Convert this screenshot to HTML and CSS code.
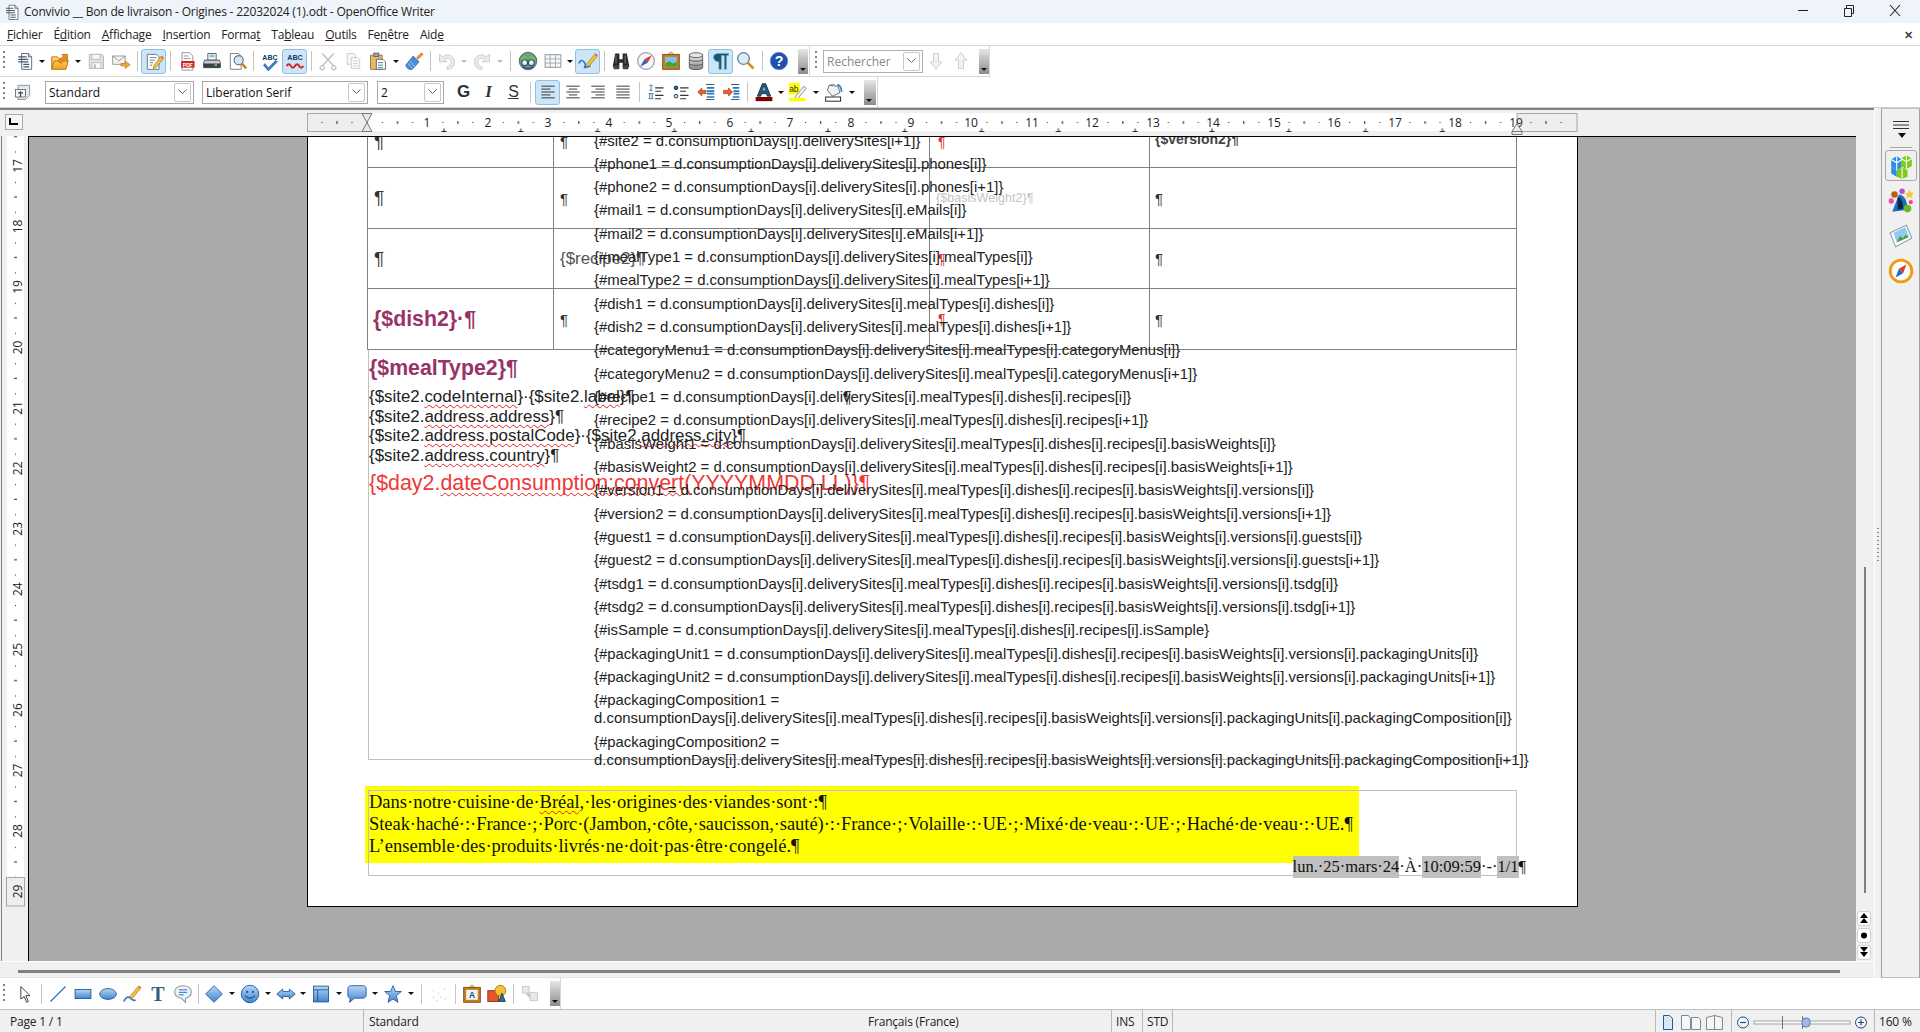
FILE: index.html
```html
<!DOCTYPE html>
<html lang="fr">
<head>
<meta charset="utf-8">
<title>Convivio __ Bon de livraison - Origines - 22032024 (1).odt - OpenOffice Writer</title>
<link rel="stylesheet" href="styles.css">
</head>
<body>
<svg class="defs" width="0" height="0" aria-hidden="true">
<defs>
<linearGradient id="gBlue" x1="0" y1="0" x2="0" y2="1"><stop offset="0" stop-color="#b9d6f2"/><stop offset="1" stop-color="#3f86cf"/></linearGradient>
<linearGradient id="gFold" x1="0" y1="0" x2="0" y2="1"><stop offset="0" stop-color="#ffd968"/><stop offset="1" stop-color="#f0a020"/></linearGradient>
<linearGradient id="gGrey" x1="0" y1="0" x2="0" y2="1"><stop offset="0" stop-color="#e8e8e8"/><stop offset="1" stop-color="#8a8a8a"/></linearGradient>
<symbol id="i-doc" viewBox="0 0 24 24"><path d="M8 3h8l4 4v15H8z" fill="#fff" stroke="#44586c"/><path d="M16 3v4h4" fill="#cfd8e0" stroke="#44586c"/><path d="M4 7h10M4 10h12M4 13h12M10 16h7M10 19h7" stroke="#44586c" stroke-width="1.4"/></symbol>
<symbol id="i-open" viewBox="0 0 24 24"><path d="M2 7h7l2 2h9v3h2l-3 10H2z" fill="url(#gFold)" stroke="#b06a10"/><path d="M2 22l3-10h17" fill="none" stroke="#b06a10"/><path d="M10 12l6-6-2-2h7v7l-2-2-6 6z" fill="#f08a1e" stroke="#a85a10" stroke-width=".7"/></symbol>
<symbol id="i-save" viewBox="0 0 24 24"><path d="M4 4h15l2 2v15H4z" fill="#e2e2e2" stroke="#b0b0b0"/><path d="M7 4h10v6H7zM7 14h11v7H7z" fill="#f7f7f7" stroke="#b8b8b8"/><path d="M9 16h3v5H9z" fill="#c4c4c4"/></symbol>
<symbol id="i-mail" viewBox="0 0 24 24"><path d="M2 6h15v10H2z" fill="#f4f4f4" stroke="#8b8b8b"/><path d="M2 6l7.500 6L17 6" fill="none" stroke="#8b8b8b"/><path d="M12 15h5v-3l6 4.500-6 4.500v-3h-5z" fill="#f0a83a" stroke="#a86c10" stroke-width=".7"/></symbol>
<symbol id="i-edit" viewBox="0 0 24 24"><path d="M4 4h11l3 3v15H4z" fill="#fff" stroke="#56697c"/><path d="M7 8h8M7 11h6M7 14h4M7 17h3" stroke="#56697c"/><path d="M12 17l8-10 3 2.500-8 10-4 1.500z" fill="#f4c040" stroke="#9a6a10" stroke-width=".7"/><path d="M20 7l1-1.300 3 2.500-1 1.300z" fill="#e0604c"/></symbol>
<symbol id="i-pdf" viewBox="0 0 24 24"><path d="M6 2h9l4 4v17H6z" fill="#fff" stroke="#7c8894"/><path d="M8 6h6M8 9h8" stroke="#7c8894"/><rect x="5" y="12" width="16" height="8" fill="#d8231b"/><text x="13" y="19" class="svgt-pdf">PDF</text></symbol>
<symbol id="i-print" viewBox="0 0 24 24"><path d="M7 3h10v8H7z" fill="#fff" stroke="#1f4f70"/><path d="M9 5h6M9 7h6" stroke="#5e85a0"/><path d="M3 11h18l1 3v6H2v-6z" fill="#c9ced2" stroke="#3a3f44"/><rect x="2" y="15" width="20" height="5" fill="#3a3f44"/><rect x="15" y="16" width="3" height="2" fill="#6fd04a"/></symbol>
<symbol id="i-prev" viewBox="0 0 24 24"><path d="M4 3h10l3 3v16H4z" fill="#fff" stroke="#5e7080"/><circle cx="14" cy="11" r="5.500" fill="#cfe6f7" stroke="#5a6f82" stroke-width="1.300"/><path d="M18 15l5 6" stroke="#c8861a" stroke-width="3"/></symbol>
<symbol id="i-spell" viewBox="0 0 24 24"><text x="12" y="11" class="svgt-abc svgt-dark">ABC</text><path d="M6 15l4 5 9-9 2 2-11 11-6-7z" fill="#3a78c8" stroke="#1c4a8a" stroke-width=".5"/></symbol>
<symbol id="i-auto" viewBox="0 0 24 24"><text x="12" y="11" class="svgt-abc svgt-dark">ABC</text><path d="M2 18q2.500-4 5 0t5 0 5 0 5 0" fill="none" stroke="#d81e1e" stroke-width="2.400"/></symbol>
<symbol id="i-cut" viewBox="0 0 24 24"><path d="M5 3l14 15M19 3L5 18" stroke="#c4c4c4" stroke-width="2"/><circle cx="5" cy="20" r="2.500" fill="none" stroke="#c4c4c4" stroke-width="1.500"/><circle cx="19" cy="20" r="2.500" fill="none" stroke="#c4c4c4" stroke-width="1.500"/></symbol>
<symbol id="i-copy" viewBox="0 0 24 24"><path d="M5 3h8l2 2v11H5z" fill="#f5f5f5" stroke="#c8c8c8"/><path d="M10 8h8l2 2v11H10z" fill="#fafafa" stroke="#c8c8c8"/><path d="M12 12h6M12 15h6M12 18h6" stroke="#d0d0d0"/></symbol>
<symbol id="i-paste" viewBox="0 0 24 24"><path d="M3 5h14v17H3z" fill="#e8b964" stroke="#8f6a26"/><rect x="7" y="2.500" width="6" height="4" fill="#9aa6b0" stroke="#556"/><path d="M10 10h8l3 3v9H10z" fill="#fff" stroke="#3d5a78"/><path d="M12 14h6M12 17h6M12 20h6" stroke="#3d5a78"/></symbol>
<symbol id="i-brush" viewBox="0 0 24 24"><path d="M15 8l6-6 2 2-6 6z" fill="#e8962a" stroke="#9a5a10" stroke-width=".6"/><path d="M11 6l7 7-8 9c-3 1-7-1-8-5z" fill="#4b8ad8" stroke="#1f4f8f" stroke-width=".8"/><path d="M7 12l6 7M5 15l5 6" stroke="#bcd8f4"/></symbol>
<symbol id="i-undo" viewBox="0 0 24 24"><path d="M3 4v9h9l-3-3c4-3 8-1 8 3 0 3-2 5-5 6v3c6 0 9-4 9-9 0-7-8-11-14-6z" fill="#ececec" stroke="#c6c6c6"/></symbol>
<symbol id="i-redo" viewBox="0 0 24 24"><path d="M21 4v9h-9l3-3c-4-3-8-1-8 3 0 3 2 5 5 6v3c-6 0-9-4-9-9 0-7 8-11 14-6z" fill="#ececec" stroke="#c6c6c6"/></symbol>
<symbol id="i-globe" viewBox="0 0 24 24"><circle cx="12" cy="12" r="10.500" fill="#6f9a8e" stroke="#3c5a52"/><path d="M3 10q3-6 8-3l-2 5H4zM14 5q6 1 7 7l-5 1-3-3z" fill="#72c04c"/><circle cx="8" cy="14" r="3.500" fill="#eaf4f8" stroke="#27506a" stroke-width="1.300"/><circle cx="16" cy="14" r="3.500" fill="#eaf4f8" stroke="#27506a" stroke-width="1.300"/><path d="M5 19q7 3 14 0" fill="none" stroke="#27506a" stroke-width="1.500"/></symbol>
<symbol id="i-table" viewBox="0 0 24 24"><rect x="2.500" y="4.500" width="19" height="15" fill="#f4f6f8" stroke="#7e868e"/><path d="M2.500 9.500h19M2.500 14.500h19M8.500 4.500v15M15 4.500v15" stroke="#9aa2aa"/></symbol>
<symbol id="i-draw" viewBox="0 0 24 24"><path d="M1 15q3-6 6-2t1 6 7-1" fill="none" stroke="#2a78c8" stroke-width="2"/><path d="M11 15l9-11 3 2.500-9 11-4 1.500z" fill="#f4c040" stroke="#9a6a10" stroke-width=".7"/><path d="M20 4l1-1.300 3 2.500-1 1.300z" fill="#e05c4c"/></symbol>
<symbol id="i-bino" viewBox="0 0 24 24"><path d="M5 3h5v7h4V3h5l3 16h-8v-5h-4v5H2z" fill="#26282a"/><rect x="3" y="17" width="7" height="5" rx="1" fill="#404448"/><rect x="14" y="17" width="7" height="5" rx="1" fill="#404448"/><path d="M6 5v10M17 5v10" stroke="#85898d"/></symbol>
<symbol id="i-comp" viewBox="0 0 24 24"><circle cx="12" cy="12" r="10" fill="#f8f8f8" stroke="#9aa0a6" stroke-width="1.500"/><path d="M19 5l-5 9-4-4z" fill="#d83a2e"/><path d="M5 19l5-9 4 4z" fill="#2a66c0"/></symbol>
<symbol id="i-gal" viewBox="0 0 24 24"><path d="M12 1l3 3H9z" fill="none" stroke="#a06a20"/><rect x="2" y="4" width="20" height="18" fill="#c87a1e" stroke="#7a4a10"/><rect x="5" y="7" width="14" height="12" fill="#7cc4ee"/><path d="M5 19v-4l5-3 4 3 5-2v6z" fill="#4f9e34"/></symbol>
<symbol id="i-db" viewBox="0 0 24 24"><path d="M4 5v15c0 3 16 3 16 0V5z" fill="url(#gGrey)" stroke="#4c4c4c"/><ellipse cx="12" cy="5" rx="8" ry="3" fill="#e4e4e4" stroke="#4c4c4c"/><path d="M4 10c0 3 16 3 16 0M4 15c0 3 16 3 16 0" fill="none" stroke="#4c4c4c"/></symbol>
<symbol id="i-para" viewBox="0 0 24 24"><path d="M9.500 22V13C5 13 3 10 3 7.500S5 3 9 3h12v2.500h-2.500V22H16V5.500h-3.500V22z" fill="#1c566e" stroke="#6aaad0" stroke-width=".8"/></symbol>
<symbol id="i-zoom" viewBox="0 0 24 24"><circle cx="9" cy="9" r="7" fill="#dcecf8" stroke="#6d8294" stroke-width="1.600"/><path d="M14 14l7 7" stroke="#d2901e" stroke-width="3.200"/></symbol>
<symbol id="i-help" viewBox="0 0 24 24"><circle cx="12" cy="12" r="10.500" fill="#1f4fb0" stroke="#6e90d4"/><text x="12" y="18" class="svgt-help">?</text></symbol>
<symbol id="i-down" viewBox="0 0 24 24"><path d="M9 3h6v10h4l-7 9-7-9h4z" fill="#f2f2f2" stroke="#c8c8c8"/></symbol>
<symbol id="i-up" viewBox="0 0 24 24"><path d="M9 21h6V11h4L12 2l-7 9h4z" fill="#f2f2f2" stroke="#c8c8c8"/></symbol>
<symbol id="i-style" viewBox="0 0 24 24"><path d="M6 4h14v12l-5 5H6z" fill="#e8e8e8" stroke="#77838e"/><rect x="3" y="9" width="12" height="9" fill="#f4f4f4" stroke="#5a6570"/><path d="M9 11v7M6 13h6" stroke="#3e4a55" stroke-width="1.500"/></symbol>
<symbol id="i-left" viewBox="0 0 24 24"><path d="M4 6h16M4 9.500h11M4 13h16M4 16.500h11M4 20h16" transform="translate(0 -1)" stroke="#2a2a2a" stroke-width="1.100"/></symbol>
<symbol id="i-center" viewBox="0 0 24 24"><path d="M4 6h16M7 9.500h10M4 13h16M7 16.500h10M4 20h16" transform="translate(0 -1)" stroke="#2a2a2a" stroke-width="1.100"/></symbol>
<symbol id="i-right" viewBox="0 0 24 24"><path d="M4 6h16M9 9.500h11M4 13h16M9 16.500h11M4 20h16" transform="translate(0 -1)" stroke="#2a2a2a" stroke-width="1.100"/></symbol>
<symbol id="i-just" viewBox="0 0 24 24"><path d="M4 6h16M4 9.500h16M4 13h16M4 16.500h16M4 20h16" transform="translate(0 -1)" stroke="#2a2a2a" stroke-width="1.100"/></symbol>
<symbol id="i-num" viewBox="0 0 24 24"><path d="M11 7h10M11 11h7M11 16h10M11 20h7" stroke="#333" stroke-width="1.300"/><path d="M4 4h4M6 4v6M4 10h4M3 14h6M4.500 14v6M7.500 14v6M3 20h6" stroke="#1f6a9e"/></symbol>
<symbol id="i-bul" viewBox="0 0 24 24"><path d="M11 7h10M11 11h7M11 16h10M11 20h7" stroke="#333" stroke-width="1.300"/><circle cx="6" cy="7" r="2.200" fill="#1f6a9e" stroke="#123"/><circle cx="6" cy="17" r="2.200" fill="#cfe0ee" stroke="#123"/></symbol>
<symbol id="i-indl" viewBox="0 0 24 24"><path d="M12 3h10M12 21h10" stroke="#333"/><path d="M13 7h9M13 11h9M13 14h9M13 18h9" stroke="#1f7ac0" stroke-width="2"/><path d="M2 12l5-5v3h5v4H7v3z" fill="#e8612a" stroke="#8a3010" stroke-width=".6"/></symbol>
<symbol id="i-indr" viewBox="0 0 24 24"><path d="M12 3h10M12 21h10" stroke="#333"/><path d="M14 7h8M15 11h7M15 14h7M14 18h8" stroke="#1f7ac0" stroke-width="2"/><path d="M14 12l-5-5v3H3v4h6v3z" fill="#e8612a" stroke="#8a3010" stroke-width=".6"/></symbol>
<symbol id="i-fcol" viewBox="0 0 24 24"><path d="M10 2h4l6 15h-4l-1-3H9l-1 3H4z" fill="#2c5878" stroke="#102a40"/><path d="M11 10h2l-1-4z" fill="#fff"/><rect x="2" y="18" width="20" height="5" fill="#800000"/></symbol>
<symbol id="i-high" viewBox="0 0 24 24"><rect x="1" y="1" width="13" height="14" fill="#ffff00"/><text x="7" y="12" class="svgt-ab">ab</text><path d="M9 17l10-12 3 2.500-10 12-4 1z" fill="#f0f0f0" stroke="#6a6a6a" stroke-width=".8"/><rect x="1" y="19" width="20" height="4" fill="#ffff00"/></symbol>
<symbol id="i-bg" viewBox="0 0 24 24"><path d="M6 4l11 1 2 8-9 4-6-7z" fill="#f3f3f3" stroke="#3d5a70"/><path d="M16 3c3 1 5 4 5 9" fill="none" stroke="#3d7aa8" stroke-width="2"/><path d="M6 4a5 3 0 0 1 8-1" fill="#6fa0c8"/><rect x="2" y="18" width="18" height="5" fill="#fff" stroke="#000"/></symbol>
<symbol id="i-sel" viewBox="0 0 24 24"><path d="M7 3v15l4-3 3 7 2-1-3-7h5z" fill="#fff" stroke="#222"/></symbol>
<symbol id="i-line" viewBox="0 0 24 24"><path d="M3 21L21 3" stroke="#2f6fb8" stroke-width="1.500"/></symbol>
<symbol id="i-rect" viewBox="0 0 24 24"><rect x="2.500" y="6.500" width="19" height="11" fill="url(#gBlue)" stroke="#1a4f98"/></symbol>
<symbol id="i-ell" viewBox="0 0 24 24"><ellipse cx="12" cy="12" rx="10" ry="6.500" fill="url(#gBlue)" stroke="#1a4f98"/></symbol>
<symbol id="i-free" viewBox="0 0 24 24"><path d="M1 21q4-8 8-4t6 2" fill="none" stroke="#2a78c8" stroke-width="2"/><path d="M9 14l9-11 3 2.500-9 11-4 1.500z" fill="#f4c040" stroke="#9a6a10" stroke-width=".7"/><path d="M18 3l1-1.300 3 2.500-1 1.300z" fill="#e05c4c"/></symbol>
<symbol id="i-text" viewBox="0 0 24 24"><text x="12" y="20" class="svgt-t">T</text></symbol>
<symbol id="i-call" viewBox="0 0 24 24"><path d="M12 2c6 0 10 3 10 7.500S18 17 15 17v5l-5-5C6 17 2 14 2 9.500S6 2 12 2z" fill="#eef2f4" stroke="#8f9aa2" stroke-width="1.300"/><path d="M7 7h10M7 10h10M7 13h6" stroke="#2a78c8" stroke-width="1.200"/></symbol>
<symbol id="i-dia" viewBox="0 0 24 24"><path d="M12 2l10 10-10 10L2 12z" fill="url(#gBlue)" stroke="#1a4f98"/></symbol>
<symbol id="i-smile" viewBox="0 0 24 24"><circle cx="12" cy="12" r="10.500" fill="url(#gBlue)" stroke="#1a4f98"/><circle cx="8.500" cy="9.500" r="1.300" fill="#1a4f98"/><circle cx="15.500" cy="9.500" r="1.300" fill="#1a4f98"/><path d="M6 14q6 6 12 0" fill="none" stroke="#1a4f98" stroke-width="1.300"/></symbol>
<symbol id="i-arr" viewBox="0 0 24 24"><path d="M1 12l7-6v3h8V6l7 6-7 6v-3H8v3z" fill="url(#gBlue)" stroke="#1a4f98"/></symbol>
<symbol id="i-flow" viewBox="0 0 24 24"><rect x="3" y="2.500" width="18" height="19" fill="url(#gBlue)" stroke="#1a4f98"/><path d="M3 7h18M8 7v14" stroke="#1a4f98"/></symbol>
<symbol id="i-bub" viewBox="0 0 24 24"><path d="M5 2h14c3 0 4 2 4 4v7c0 2-1 4-4 4H9l-6 5 1-5c-2 0-3-2-3-4V6c0-2 1-4 4-4z" fill="url(#gBlue)" stroke="#1a4f98"/></symbol>
<symbol id="i-star" viewBox="0 0 24 24"><path d="M12 2l3 7h7l-6 5 2 8-6-4-6 4 2-8-6-5h7z" fill="url(#gBlue)" stroke="#1a4f98"/></symbol>
<symbol id="i-pts" viewBox="0 0 24 24"><path d="M5 16h1M11 11h1M18 6h1M9 20h1M14 16h1M19 18h1M5 8h1" stroke="#b8b8b8" stroke-width="1.600"/></symbol>
<symbol id="i-fw" viewBox="0 0 24 24"><path d="M12 1l3 3H9z" fill="none" stroke="#8a5a20"/><rect x="2" y="4" width="20" height="18" fill="#c87a1e" stroke="#7a4a10"/><rect x="5" y="7" width="14" height="12" fill="#eef2f6"/><text x="12" y="17" class="svgt-a">A</text></symbol>
<symbol id="i-ins" viewBox="0 0 24 24"><rect x="1" y="8" width="13" height="13" fill="#e8542a" stroke="#7a2810"/><circle cx="16" cy="8" r="6.500" fill="#f2c030" stroke="#98701a"/><path d="M14 21l4-10 4 10z" fill="#3a6a8c" stroke="#183850"/></symbol>
<symbol id="i-grp" viewBox="0 0 24 24"><path d="M3 3h8v8H3zM12 10h9v10h-9z" fill="#e8e8e8" stroke="#c4c4c4"/><path d="M8 11l4 4" stroke="#c4c4c4" stroke-width="3"/></symbol>
<symbol id="i-cubes" viewBox="0 0 24 24"><path d="M3 6l5-3 5 3v7l-5 3-5-3z" fill="#2a8ee8"/><path d="M12 5l5-3 5 3v7l-5 3-5-3z" fill="#7ecb1c"/><path d="M8 16l5-3 5 3v6l-5 2-5-2z" fill="#7ecb1c"/><path d="M3 13l5 3v6l-5-3z" fill="#2a8ee8"/><path d="M8 3v13M3 6l5 3 5-3M17 2v13M12 5l5 3 5-3M13 13v11" stroke="#fff" fill="none"/></symbol>
<symbol id="i-styles" viewBox="0 0 24 24"><circle cx="6" cy="6" r="3" fill="#b8601a"/><circle cx="3" cy="12" r="2.500" fill="#f050a0"/><circle cx="13" cy="3" r="2.500" fill="#b050d0"/><path d="M20 1l1 3 3 .5-2 2 .5 3-2.500-1.500L17 10l.5-3-2-2 3-.5z" fill="#f4c838"/><circle cx="21" cy="13" r="2" fill="#f05070"/><path d="M10 6c5 0 8 6 8 14L4 22z" fill="#1a6fc0"/><path d="M9 8c4 1 5 7 5 11l-5 1z" fill="#10283e"/><circle cx="18" cy="19" r="3.500" fill="#6cb82a"/></symbol>
<symbol id="i-pic" viewBox="0 0 24 24"><path d="M2 9l15-7 5 12-15 8z" fill="#fff" stroke="#8aa0b0"/><path d="M5 9l11-5 3.500 9L8 18z" fill="#8fcdf0"/><path d="M8 18l3-6 3 2 2-3 3 2z" fill="#4f9e34"/></symbol>
<symbol id="i-nav" viewBox="0 0 24 24"><circle cx="12" cy="12" r="10" fill="#fff" stroke="#ee9a12" stroke-width="2.600"/><path d="M17 6l-3 8-4-4z" fill="#e03a2e"/><path d="M7 18l3-8 4 4z" fill="#2a66c0"/></symbol>
</defs>
</svg>

<header class="titlebar">
  <svg class="title-icon" width="18" height="18"><use href="#i-doc"/></svg>
  <span class="title-text">Convivio __ Bon de livraison - Origines - 22032024 (1).odt - OpenOffice Writer</span>
  <div class="winbtns">
    <svg width="46" height="22"><path d="M18 10.500h10" stroke="#222"/></svg>
    <svg width="46" height="22"><path d="M18.500 8.500h7v8h-7zM20.500 8V5.500h7v8H26" fill="none" stroke="#222"/></svg>
    <svg width="46" height="22"><path d="M18 5l10 11M28 5L18 16" stroke="#222" stroke-width="1.100"/></svg>
  </div>
</header>

<nav class="menubar">
  <span><u>F</u>ichier</span><span>É<u>d</u>ition</span><span><u>A</u>ffichage</span><span><u>I</u>nsertion</span><span>Forma<u>t</u></span><span>Ta<u>b</u>leau</span><span><u>O</u>utils</span><span>Fe<u>n</u>être</span><span>Aid<u>e</u></span>
  <span class="doc-close">✕</span>
</nav>

<div class="toolrow">
  <div class="tb tb-std">
    <i class="handle"></i>
    <b class="ic ic-first"><svg><use href="#i-doc"/></svg></b><i class="dd"></i>
    <b class="ic"><svg><use href="#i-open"/></svg></b><i class="dd dd-w"></i>
    <b class="ic"><svg><use href="#i-save"/></svg></b>
    <b class="ic"><svg><use href="#i-mail"/></svg></b><i class="sep"></i>
    <b class="ic on"><svg><use href="#i-edit"/></svg></b><i class="sep"></i>
    <b class="ic"><svg><use href="#i-pdf"/></svg></b>
    <b class="ic"><svg><use href="#i-print"/></svg></b>
    <b class="ic"><svg><use href="#i-prev"/></svg></b><i class="sep"></i>
    <b class="ic"><svg><use href="#i-spell"/></svg></b>
    <b class="ic on"><svg><use href="#i-auto"/></svg></b><i class="sep"></i>
    <b class="ic"><svg><use href="#i-cut"/></svg></b>
    <b class="ic"><svg><use href="#i-copy"/></svg></b>
    <b class="ic"><svg><use href="#i-paste"/></svg></b><i class="dd dd-w"></i>
    <b class="ic"><svg><use href="#i-brush"/></svg></b><i class="sep"></i>
    <b class="ic"><svg><use href="#i-undo"/></svg></b><i class="dd off"></i>
    <b class="ic"><svg><use href="#i-redo"/></svg></b><i class="dd dd-w off"></i><i class="sep sep-w"></i>
    <b class="ic"><svg><use href="#i-globe"/></svg></b>
    <b class="ic"><svg><use href="#i-table"/></svg></b><i class="dd"></i>
    <b class="ic on"><svg><use href="#i-draw"/></svg></b><i class="sep"></i>
    <b class="ic"><svg><use href="#i-bino"/></svg></b>
    <b class="ic"><svg><use href="#i-comp"/></svg></b>
    <b class="ic"><svg><use href="#i-gal"/></svg></b>
    <b class="ic"><svg><use href="#i-db"/></svg></b>
    <b class="ic on"><svg><use href="#i-para"/></svg></b>
    <b class="ic"><svg><use href="#i-zoom"/></svg></b><i class="sep"></i>
    <b class="ic"><svg><use href="#i-help"/></svg></b>
    <i class="strip strip-std"></i>
  </div>
  <div class="tb tb-find">
    <i class="handle handle-find"></i>
    <div class="combo combo-find"><span class="combo-val">Rechercher</span><span class="combo-btn"><svg width="9" height="6"><path d="M.5.500l4 4 4-4" fill="none" stroke="#666"/></svg></span></div>
    <b class="ic"><svg><use href="#i-down"/></svg></b>
    <b class="ic"><svg><use href="#i-up"/></svg></b>
    <i class="strip strip-find"></i>
  </div>
</div>

<div class="toolrow toolrow-last">
  <div class="tb tb-fmt">
    <i class="handle"></i>
    <b class="ic ic-style"><svg><use href="#i-style"/></svg></b>
    <div class="combo combo-style"><span class="combo-val">Standard</span><span class="combo-btn"><svg width="9" height="6"><path d="M.5.500l4 4 4-4" fill="none" stroke="#666"/></svg></span></div>
    <div class="combo combo-font"><span class="combo-val">Liberation Serif</span><span class="combo-btn"><svg width="9" height="6"><path d="M.5.500l4 4 4-4" fill="none" stroke="#666"/></svg></span></div>
    <div class="combo combo-size"><span class="combo-val">2</span><span class="combo-btn"><svg width="9" height="6"><path d="M.5.500l4 4 4-4" fill="none" stroke="#666"/></svg></span></div>
    <b class="ic ic-g fmt-b">G</b><b class="ic fmt-i">I</b><b class="ic fmt-s">S</b><i class="sep sep-f"></i>
    <b class="ic on"><svg><use href="#i-left"/></svg></b>
    <b class="ic"><svg><use href="#i-center"/></svg></b>
    <b class="ic"><svg><use href="#i-right"/></svg></b>
    <b class="ic"><svg><use href="#i-just"/></svg></b><i class="sep"></i>
    <b class="ic"><svg><use href="#i-num"/></svg></b>
    <b class="ic"><svg><use href="#i-bul"/></svg></b>
    <b class="ic"><svg><use href="#i-indl"/></svg></b>
    <b class="ic"><svg><use href="#i-indr"/></svg></b><i class="sep"></i>
    <b class="ic"><svg><use href="#i-fcol"/></svg></b><i class="dd dd-n"></i>
    <b class="ic"><svg><use href="#i-high"/></svg></b><i class="dd dd-w"></i>
    <b class="ic"><svg><use href="#i-bg"/></svg></b><i class="dd dd-w"></i>
    <i class="strip strip-fmt"></i>
  </div>
</div>

<main class="main">
  <div class="editor">
    <div class="rulerrow">
      <div class="corner"><svg width="10" height="8"><path d="M1 0v6h8" fill="none" stroke="#000" stroke-width="2"/></svg></div>
      <svg class="hruler" width="1550" height="26" viewBox="28 0 1550 26">
        <defs>
          <pattern id="hcm" x="367" y="0" width="60.45" height="26" patternUnits="userSpaceOnUse"><rect x="15" y="12" width="1" height="1" fill="#222"/><rect x="30" y="11" width="1" height="3" fill="#222"/><rect x="45" y="12" width="1" height="1" fill="#222"/></pattern>
          <pattern id="htab" x="444" y="0" width="76.8" height="26" patternUnits="userSpaceOnUse"><path d="M0 18.500v3M-2.500 21.500h5M76.800 18.500v3M74.300 21.500h5" stroke="#222" fill="none"/></pattern>
        </defs>
        <rect x="367" y="3" width="1150" height="18" fill="#fff"/>
        <rect x="307.500" y="3.500" width="59.500" height="18" fill="#eee" stroke="#a8a8a8"/>
        <rect x="1517" y="3.500" width="60" height="18" fill="#eee" stroke="#a8a8a8"/>
        <rect x="307" y="3" width="1270" height="18" fill="url(#hcm)"/>
        <rect x="441" y="14" width="1076" height="10" fill="url(#htab)"/>
        <g class="rnum">
          <text x="427" y="17">1</text><text x="488" y="17">2</text><text x="548" y="17">3</text><text x="609" y="17">4</text><text x="669" y="17">5</text><text x="730" y="17">6</text><text x="790" y="17">7</text><text x="851" y="17">8</text><text x="911" y="17">9</text><text x="971" y="17">10</text><text x="1032" y="17">11</text><text x="1092" y="17">12</text><text x="1153" y="17">13</text><text x="1213" y="17">14</text><text x="1274" y="17">15</text><text x="1334" y="17">16</text><text x="1395" y="17">17</text><text x="1455" y="17">18</text><text x="1516" y="17">19</text>
        </g>
        <path d="M362 3.500h10l-5 9 5 9h-10l5-9z" fill="#e8e8e8" stroke="#777"/>
        <path d="M1512 21.500h10v3h-10zM1512 21.500l5-8 5 8" fill="#eee" stroke="#777"/>
      </svg>
    </div>
    <div class="workspace">
      <div class="vrulerbox">
        <svg class="vruler" width="27" height="825" viewBox="1 136 27 825">
          <defs>
            <pattern id="vcm" x="0" y="166" width="27" height="60.45" patternUnits="userSpaceOnUse"><rect x="14" y="16" width="1" height="1" fill="#222"/><rect x="13" y="30.500" width="3" height="1" fill="#222"/><rect x="14" y="46" width="1" height="1" fill="#222"/></pattern>
          </defs>
          <rect x="6" y="136" width="17" height="741" fill="#fff"/>
          <rect x="5.500" y="877.500" width="18" height="28.500" fill="#eee" stroke="#a8a8a8"/>
          <rect x="6" y="136" width="17" height="741" fill="url(#vcm)"/>
          <g class="rnum">
            <text transform="translate(21 166) rotate(-90)">17</text><text transform="translate(21 226.500) rotate(-90)">18</text><text transform="translate(21 287) rotate(-90)">19</text><text transform="translate(21 347.500) rotate(-90)">20</text><text transform="translate(21 408) rotate(-90)">21</text><text transform="translate(21 468.300) rotate(-90)">22</text><text transform="translate(21 528.800) rotate(-90)">23</text><text transform="translate(21 589.200) rotate(-90)">24</text><text transform="translate(21 649.700) rotate(-90)">25</text><text transform="translate(21 710.100) rotate(-90)">26</text><text transform="translate(21 770.500) rotate(-90)">27</text><text transform="translate(21 831) rotate(-90)">28</text><text transform="translate(21 891.500) rotate(-90)">29</text>
          </g>
        </svg>
      </div>
      <div class="doc">
        <div class="page">
          <div class="yellow"></div>

          <div class="tbl">
            <div class="cell cell-top pil"><span>¶</span></div>
            <div class="cell cell-top pil cell-p2"><span>¶</span></div>
            <div class="cell cell-top red-pil cell-p3"><span>¶</span></div>
            <div class="cell cell-top cell-p4 ver"><span>{$version2}¶</span></div>

            <div class="cell pil"><span>¶</span></div>
            <div class="cell pil cell-p2"><span>¶</span></div>
            <div class="cell cell-p3 basis"><span>{$basisWeight2}¶</span></div>
            <div class="cell pil cell-p4"><span>¶</span></div>

            <div class="cell pil"><span>¶</span></div>
            <div class="cell recipe"><span>{$recipe2}¶</span></div>
            <div class="cell red-pil cell-p3"><span>¶</span></div>
            <div class="cell pil cell-p4"><span>¶</span></div>

            <div class="cell dish"><span>{$dish2}·¶</span></div>
            <div class="cell pil cell-p2"><span>¶</span></div>
            <div class="cell red-pil cell-p3"><span>¶</span></div>
            <div class="cell pil cell-p4"><span>¶</span></div>
          </div>

          <section class="frame">
            <p class="meal">{$mealType2}¶</p>
            <div class="addr">
              <p>{$site2.<span class="sq">codeInternal</span>}·{$site2.<span class="sq">label</span>}¶</p>
              <p>{$site2.<span class="sq">address.address</span>}¶</p>
              <p>{$site2.<span class="sq">address.postalCode</span>}·{$site2.<span class="sq">address.city</span>}¶</p>
              <p>{$site2.<span class="sq">address.country</span>}¶</p>
            </div>
            <p class="date">{$day2.<span class="sq">dateConsumption:convert</span>(YYYYMMDD,LL)}¶</p>
          </section>

          <section class="legal">
            <p>Dans·notre·cuisine·de·<span class="sq">Bréal</span>,·les·origines·des·viandes·sont·:¶</p>
            <p class="tight">Steak·haché·:·France·;·Porc·(Jambon,·côte,·saucisson,·sauté)·:·France·;·Volaille·:·UE·;·Mixé·de·veau·:·UE·;·Haché·de·veau·:·UE.¶</p>
            <p>L’ensemble·des·produits·livrés·ne·doit·pas·être·congelé.¶</p>
            <p class="foot"><span class="fld">lun.·25·mars·24</span>·À·<span class="fld">10:09:59</span>·-·<span class="fld">1/1</span>¶</p>
          </section>

          <div class="vars">
            <p>{#site2 = d.consumptionDays[i].deliverySites[i+1]}</p>
            <p>{#phone1 = d.consumptionDays[i].deliverySites[i].phones[i]}</p>
            <p>{#phone2 = d.consumptionDays[i].deliverySites[i].phones[i+1]}</p>
            <p>{#mail1 = d.consumptionDays[i].deliverySites[i].eMails[i]}</p>
            <p>{#mail2 = d.consumptionDays[i].deliverySites[i].eMails[i+1]}</p>
            <p>{#mealType1 = d.consumptionDays[i].deliverySites[i].mealTypes[i]}</p>
            <p>{#mealType2 = d.consumptionDays[i].deliverySites[i].mealTypes[i+1]}</p>
            <p>{#dish1 = d.consumptionDays[i].deliverySites[i].mealTypes[i].dishes[i]}</p>
            <p>{#dish2 = d.consumptionDays[i].deliverySites[i].mealTypes[i].dishes[i+1]}</p>
            <p>{#categoryMenu1 = d.consumptionDays[i].deliverySites[i].mealTypes[i].categoryMenus[i]}</p>
            <p>{#categoryMenu2 = d.consumptionDays[i].deliverySites[i].mealTypes[i].categoryMenus[i+1]}</p>
            <p>{#recipe1 = d.consumptionDays[i].deliverySites[i].mealTypes[i].dishes[i].recipes[i]}</p>
            <p>{#recipe2 = d.consumptionDays[i].deliverySites[i].mealTypes[i].dishes[i].recipes[i+1]}</p>
            <p>{#basisWeight1 = d.consumptionDays[i].deliverySites[i].mealTypes[i].dishes[i].recipes[i].basisWeights[i]}</p>
            <p>{#basisWeight2 = d.consumptionDays[i].deliverySites[i].mealTypes[i].dishes[i].recipes[i].basisWeights[i+1]}</p>
            <p>{#version1 = d.consumptionDays[i].deliverySites[i].mealTypes[i].dishes[i].recipes[i].basisWeights[i].versions[i]}</p>
            <p>{#version2 = d.consumptionDays[i].deliverySites[i].mealTypes[i].dishes[i].recipes[i].basisWeights[i].versions[i+1]}</p>
            <p>{#guest1 = d.consumptionDays[i].deliverySites[i].mealTypes[i].dishes[i].recipes[i].basisWeights[i].versions[i].guests[i]}</p>
            <p>{#guest2 = d.consumptionDays[i].deliverySites[i].mealTypes[i].dishes[i].recipes[i].basisWeights[i].versions[i].guests[i+1]}</p>
            <p>{#tsdg1 = d.consumptionDays[i].deliverySites[i].mealTypes[i].dishes[i].recipes[i].basisWeights[i].versions[i].tsdg[i]}</p>
            <p>{#tsdg2 = d.consumptionDays[i].deliverySites[i].mealTypes[i].dishes[i].recipes[i].basisWeights[i].versions[i].tsdg[i+1]}</p>
            <p>{#isSample = d.consumptionDays[i].deliverySites[i].mealTypes[i].dishes[i].recipes[i].isSample}</p>
            <p>{#packagingUnit1 = d.consumptionDays[i].deliverySites[i].mealTypes[i].dishes[i].recipes[i].basisWeights[i].versions[i].packagingUnits[i]}</p>
            <p>{#packagingUnit2 = d.consumptionDays[i].deliverySites[i].mealTypes[i].dishes[i].recipes[i].basisWeights[i].versions[i].packagingUnits[i+1]}</p>
            <p>{#packagingComposition1 =<br>d.consumptionDays[i].deliverySites[i].mealTypes[i].dishes[i].recipes[i].basisWeights[i].versions[i].packagingUnits[i].packagingComposition[i]}</p>
            <p>{#packagingComposition2 =<br>d.consumptionDays[i].deliverySites[i].mealTypes[i].dishes[i].recipes[i].basisWeights[i].versions[i].packagingUnits[i].packagingComposition[i+1]}</p>
          </div>
          <span class="stray">¶</span>
        </div>
      </div>
      <div class="vscroll">
        <div class="vthumb"></div>
        <div class="navbtns">
          <span class="navbtn"><svg width="10" height="11"><path d="M5 0l4 5H1zM5 5l4 5H1z"/></svg></span>
          <span class="navbtn"><svg width="10" height="11"><circle cx="5" cy="5.500" r="3"/></svg></span>
          <span class="navbtn"><svg width="10" height="11"><path d="M5 5L1 0h8zM5 10L1 5h8z"/></svg></span>
        </div>
      </div>
    </div>
    <div class="hscroll"><div class="hthumb"></div></div>
  </div>
  <aside class="sidebar">
    <div class="grip"></div>
    <div class="deck">
      <div class="deck-menu"><svg width="18" height="20"><path d="M1 1.500h16M1 5h16M1 8.500h16" stroke="#333" stroke-width="1.200"/><path d="M6 13h8l-4 5z" fill="#111"/></svg></div>
      <div class="deck-sep"></div>
      <div class="deck-btn on"><svg width="26" height="26"><use href="#i-cubes"/></svg></div>
      <div class="deck-btn"><svg width="26" height="26"><use href="#i-styles"/></svg></div>
      <div class="deck-btn"><svg width="26" height="26"><use href="#i-pic"/></svg></div>
      <div class="deck-btn"><svg width="26" height="26"><use href="#i-nav"/></svg></div>
    </div>
  </aside>
</main>

<div class="drawrow">
  <div class="tb tb-draw">
    <i class="handle"></i>
    <b class="ic ic-first"><svg><use href="#i-sel"/></svg></b><i class="sep sep-d"></i>
    <b class="ic"><svg><use href="#i-line"/></svg></b>
    <b class="ic"><svg><use href="#i-rect"/></svg></b>
    <b class="ic"><svg><use href="#i-ell"/></svg></b>
    <b class="ic"><svg><use href="#i-free"/></svg></b>
    <b class="ic"><svg><use href="#i-text"/></svg></b>
    <b class="ic"><svg><use href="#i-call"/></svg></b><i class="sep sep-n"></i>
    <b class="ic"><svg><use href="#i-dia"/></svg></b><i class="dd dd-w"></i>
    <b class="ic"><svg><use href="#i-smile"/></svg></b><i class="dd dd-w"></i>
    <b class="ic"><svg><use href="#i-arr"/></svg></b><i class="dd"></i>
    <b class="ic"><svg><use href="#i-flow"/></svg></b><i class="dd dd-w"></i>
    <b class="ic"><svg><use href="#i-bub"/></svg></b><i class="dd dd-w"></i>
    <b class="ic"><svg><use href="#i-star"/></svg></b><i class="dd dd-w"></i><i class="sep sep-w"></i>
    <b class="ic"><svg><use href="#i-pts"/></svg></b><i class="sep"></i>
    <b class="ic"><svg><use href="#i-fw"/></svg></b>
    <b class="ic"><svg><use href="#i-ins"/></svg></b><i class="sep"></i>
    <b class="ic"><svg><use href="#i-grp"/></svg></b>
    <i class="strip strip-draw"></i>
  </div>
</div>

<footer class="status">
  <span class="st st-page">Page 1 / 1</span>
  <span class="st st-style">Standard</span>
  <span class="st st-lang">Français (France)</span>
  <span class="st st-ins">INS</span>
  <span class="st st-std">STD</span>
  <span class="st st-blank"></span>
  <span class="st st-views">
    <svg width="70" height="18"><path d="M4.500 2.500h6l3 3v11h-9z" fill="#dbe7f4" stroke="#1c5a9a"/><path d="M22.500 2.500h7l2 3v11h-9zM32.500 4.500h7l2 2v10h-9z" fill="#f4f6f8" stroke="#7c8a96"/><path d="M47.500 4.500l8-2v14l-8 0zM55.500 2.500l8 2v12h-8z" fill="#f4f6f8" stroke="#7c8a96"/></svg>
  </span>
  <span class="st st-zoom">
    <svg width="142" height="18"><circle cx="10" cy="9.500" r="5.500" fill="#f4f8fb" stroke="#1c4a7a"/><path d="M7 9.500h6" stroke="#1c4a7a" stroke-width="1.200"/><rect x="21" y="8" width="96" height="3" fill="#fafafa" stroke="#a0a4a8"/><path d="M49.500 3v13M69.500 3v13" stroke="#70757a"/><rect x="69" y="5" width="8" height="9" rx="3.500" fill="#9db9e4" stroke="#5a7aaa"/><circle cx="128" cy="9.500" r="5.500" fill="#f4f8fb" stroke="#1c4a7a"/><path d="M125 9.500h6M128 6.500v6" stroke="#1c4a7a" stroke-width="1.200"/></svg>
  </span>
  <span class="st st-pct">160 %</span>
</footer>
</body>
</html>
```

FILE: styles.css
```css
* { box-sizing: border-box; }
html, body { margin: 0; padding: 0; height: 100%; }
body {
  width: 1920px;
  height: 1032px;
  overflow: hidden;
  display: flex;
  flex-direction: column;
  background: #fff;
  font-family: "Open Sans", "Noto Sans", sans-serif;
  font-size: 12px;
  color: #222;
}
p { margin: 0; }
.defs { position: absolute; }
.svgt-pdf { font: bold 6px "Liberation Sans", sans-serif; fill: #fff; text-anchor: middle; }
.svgt-abc { font: bold 8.500px "Liberation Sans", sans-serif; text-anchor: middle; }
.svgt-dark { fill: #123a5a; }
.svgt-help { font: bold 17px "Liberation Sans", sans-serif; fill: #fff; text-anchor: middle; }
.svgt-ab { font: 10px "Liberation Sans", sans-serif; fill: #333; text-anchor: middle; }
.svgt-t { font: bold 24px "Liberation Serif", serif; fill: #2f5f7f; text-anchor: middle; }
.svgt-a { font: bold 10px "Liberation Sans", sans-serif; fill: #1a4f78; text-anchor: middle; }

/* title + menu */
.titlebar { height: 23px; flex: none; background: #eff3fa; display: flex; align-items: center; padding-left: 3px; }
.title-icon { flex: none; }
.title-text { margin-left: 3px; white-space: nowrap; letter-spacing: -0.2px; }
.winbtns { margin-left: auto; display: flex; height: 23px; padding-right: 2px; }
.menubar { height: 23px; flex: none; display: flex; align-items: center; gap: 11px; padding-left: 7px; border-bottom: 1px solid #d8d8d8; letter-spacing: -0.23px; }
.doc-close { margin-left: auto; margin-right: 7px; font-size: 11px; font-weight: 700; color: #444; }

/* toolbars */
.toolrow { height: 31px; flex: none; display: flex; }
.toolrow-last { border-bottom: 1px solid #cfcfcf; }
.tb { display: flex; align-items: center; height: 31px; border-bottom: 1px solid #d8d8d8; border-right: 1px solid #d8d8d8; padding-left: 3px; }
.toolrow-last .tb { height: 30px; border-bottom: 0; }
.tb-std { width: 810px; }
.tb-find { width: 180px; padding-left: 0; }
.tb-fmt { width: 878px; }
.tb-draw { width: 561px; height: 31px; border-bottom: 0; }
.handle { flex: none; width: 2px; height: 20px; background: repeating-linear-gradient(#808080 0 2px, transparent 2px 5px); }
.handle-find { margin-left: 5px; }
.ic { flex: none; width: 25px; height: 25px; display: flex; align-items: center; justify-content: center; border: 1px solid transparent; border-radius: 3px; font-style: normal; }
.ic svg { width: 20px; height: 20px; }
.ic.on { background: #cde6f7; border-color: #92c0e0; }
.ic-first { margin-left: 7px; }
.ic-style { margin-left: 5px; }
.dd { flex: none; width: 10px; height: 10px; display: flex; align-items: center; justify-content: center; }
.dd::after { content: ""; border-left: 3px solid transparent; border-right: 3px solid transparent; border-top: 3px solid #111; }
.dd.off::after { border-top-color: #bbb; }
.dd-w { width: 11px; }
.dd-n { width: 9px; }
.sep { flex: none; width: 8px; height: 20px; background: linear-gradient(#c4c4c4, #c4c4c4) center / 1px 100% no-repeat; }
.sep-w { width: 10px; }
.sep-f { width: 9px; }
.sep-d { width: 8px; }
.sep-n { width: 6px; }
.strip { flex: none; position: relative; width: 10px; height: 25px; background: linear-gradient(#e6e6e6, #8c8c8c); }
.strip::after { content: ""; position: absolute; left: 2px; bottom: 3px; border-left: 3px solid transparent; border-right: 3px solid transparent; border-top: 3px solid #111; }
.strip-std { margin-left: 7px; }
.strip-find { margin-left: 6px; }
.strip-fmt { margin-left: 7px; width: 12px; }
.strip-draw { margin-left: 8px; }
.combo { flex: none; display: flex; align-items: center; height: 23px; border: 1px solid #a8a8a8; background: #fff; }
.combo-val { flex: 1; padding-left: 3px; white-space: nowrap; color: #111; }
.combo-btn { flex: none; width: 17px; height: 19px; margin-right: 2px; border: 1px solid #c8c8c8; border-radius: 2px; display: flex; align-items: center; justify-content: center; }
.combo-style { width: 149px; margin-left: 10px; }
.combo-font { width: 166px; margin-left: 8px; }
.combo-size { width: 67px; margin-left: 9px; }
.combo-find { width: 100px; margin-left: 6px; border-color: #b0b0b0; }
.combo-find .combo-val { color: #888; }
.ic-g { margin-left: 7px; }
.fmt-b { font: 900 17px "Liberation Sans", sans-serif; color: #2a3338; }
.fmt-i { font: italic 700 17px "Liberation Serif", serif; color: #333; }
.fmt-s { font: 400 16px "Liberation Sans", sans-serif; color: #333; text-decoration: underline; }

/* main */
.main { height: 870px; flex: none; display: flex; }
.editor { width: 1874px; flex: none; display: flex; flex-direction: column; background: #f0f0f0; border-left: 1px solid #f0f0f0; }
.rulerrow { height: 28px; flex: none; display: flex; border-top: 2px solid #808080; margin-left: -1px; }
.corner { flex: none; width: 18px; height: 16px; margin: 4px 0 0 5px; background: #f6f6f6; border: 1px solid #a8a8a8; display: flex; align-items: center; justify-content: center; }
.hruler { flex: none; margin-left: 5px; }
.rnum text { font: 12px "Open Sans", sans-serif; fill: #222; text-anchor: middle; }
.workspace { height: 825px; flex: none; display: flex; }
.vrulerbox { flex: none; width: 27px; border-left: 1px solid #808080; margin-left: 0; }
.vruler { display: block; }
.doc { width: 1828px; flex: none; height: 825px; background: #aaaaaa; border-top: 1px solid #000; border-left: 1px solid #000; padding-left: 278px; overflow: hidden; }
.page { position: relative; width: 1271px; height: 770px; background: #fff; border: 1px solid #000; border-top: 0; padding-top: 0; font-family: "Liberation Sans", sans-serif; }

.tbl { position: relative; display: grid; grid-template-columns: 186px 376px 220px 367px; grid-template-rows: 31px 61px 60px 61px; margin-left: 59px; width: 1150px; border-left: 1px solid #808080; }
.cell { display: flex; align-items: center; padding-left: 6px; border-right: 1px solid #808080; border-bottom: 1px solid #808080; white-space: nowrap; }
.cell-top { align-items: flex-start; }
.cell-top span { line-height: 10px; }
.pil { font-size: 19px; color: #333; }
.cell-p2 { padding-left: 6px; font-size: 15px; }
.cell-p3 { padding-left: 8px; }
.cell-p4 { padding-left: 5px; font-size: 15px; }
.red-pil { font-size: 14px; color: #e03030; }
.ver { font-size: 14px; font-weight: 700; color: #444; }
.ver span { line-height: 4px; }
.basis { font-size: 12.600px; color: #c4c4c4; padding-left: 6px; }
.recipe { font-size: 16.900px; color: #555; padding-left: 6px; }
.dish { font-size: 21.300px; font-weight: 700; color: #993366; padding-left: 5px; }

.frame { margin: -1px 0 0 60px; width: 1149px; height: 411px; border: 1px solid #c0c0c0; padding: 3px 0 0 0; }
.meal { font-size: 21.300px; font-weight: 700; color: #993366; line-height: 30px; white-space: nowrap; }
.addr { margin-top: 4px; font-size: 16.900px; line-height: 19.600px; color: #222; white-space: nowrap; }
.date { margin-top: 3px; font-size: 21.400px; line-height: 30px; color: #f03838; white-space: nowrap; }
.sq { text-decoration: underline wavy #e02020 1px; text-underline-offset: 2px; text-decoration-skip-ink: none; }

.legal { position: relative; margin: 30px 0 0 60px; width: 1149px; height: 86px; border: 1px solid #c0c0c0; font-family: "Liberation Serif", serif; font-size: 18.500px; line-height: 22px; color: #111; }
.legal p { white-space: nowrap; }
.legal .tight { letter-spacing: -0.05px; }
.legal .foot { display: flex; justify-content: flex-end; margin-right: -10px; margin-top: -1px; white-space: pre; font-size: 16.500px; }
.fld { background: #c0c0c0; }
.yellow { position: absolute; left: 57px; top: 649px; width: 994px; height: 77px; background: #ffff00; }

.vars { position: absolute; left: 286px; top: -5.500px; font-size: 14.920px; line-height: 18px; color: #222; white-space: nowrap; }
.vars p { margin-bottom: 5.340px; }
.stray { position: absolute; left: 535px; top: 252px; font-size: 16px; line-height: 18px; color: #222; }

.vscroll { flex: 1; position: relative; background: #f0f0f0; }
.vthumb { position: absolute; left: 8px; top: 431px; width: 2px; height: 326px; background: #808080; }
.navbtns { position: absolute; left: 1px; top: 775px; display: flex; flex-direction: column; gap: 2px; }
.navbtn { width: 14px; height: 15px; border: 1px solid #d0d0d0; border-radius: 3px; background: #fff; display: flex; align-items: center; justify-content: center; }
.hscroll { height: 17px; flex: none; background: #f0f0f0; border-top: 1px solid #fff; border-bottom: 1px solid #e4e4e4; padding: 8px 0 0 17px; }
.hthumb { width: 1822px; height: 3px; background: #808080; }

.sidebar { flex: 1; position: relative; display: flex; background: #f0f0f0; border-left: 1px solid #fff; }
.grip { flex: none; width: 6px; background: repeating-linear-gradient(#888 0 1px, transparent 1px 4px) center 420px / 2px 34px no-repeat; }
.deck { width: 39px; flex: none; border-left: 1px solid #a0a0a0; border-right: 1px solid #a0a0a0; border-top: 1px solid #c0c0c0; border-bottom: 1px solid #c0c0c0; display: flex; flex-direction: column; align-items: center; }
.deck-menu { margin-top: 11px; height: 20px; }
.deck-sep { width: 22px; height: 1px; background: #a8a8a8; margin-top: 7px; margin-bottom: 2px; }
.deck-btn { width: 32px; height: 31px; margin-bottom: 4px; display: flex; align-items: center; justify-content: center; border: 1px solid transparent; border-radius: 3px; }
.deck-btn.on { border-color: #a8a8a8; }

/* bottom */
.drawrow { height: 32px; flex: none; display: flex; border-bottom: 1px solid #c0c0c0; }
.status { height: 22px; flex: none; display: flex; align-items: center; background: #f0f0f0; white-space: nowrap; }
.st { display: flex; align-items: center; height: 22px; flex: none; border-left: 1px solid #b8b8b8; padding-left: 4px; padding-top: 1px; letter-spacing: -0.2px; }
.st-page { width: 363px; border-left: 0; padding-left: 10px; }
.st-style { width: 748px; padding-left: 5px; position: relative; }
.st-lang { position: absolute; left: 868px; border: 0; padding: 1px 0 0; }
.st-ins { width: 31px; }
.st-std { width: 30px; }
.st-blank { width: 483px; }
.st-views { width: 76px; padding-left: 3px; }
.st-zoom { width: 143px; padding-left: 1px; }
.st-pct { flex: 1; }
```
